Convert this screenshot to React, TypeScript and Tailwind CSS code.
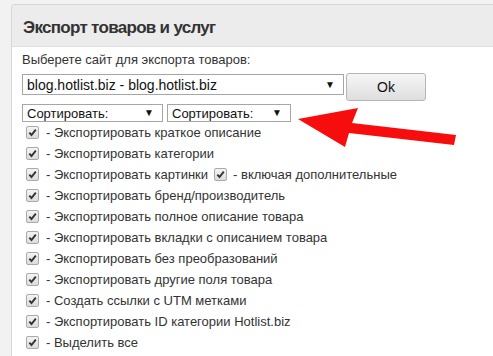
import React from "react";

const rows: { label: string; extra?: string }[] = [
  { label: "- Экспортировать краткое описание" },
  { label: "- Экспортировать категории" },
  { label: "- Экспортировать картинки", extra: "- включая дополнительные" },
  { label: "- Экспортировать бренд/производитель" },
  { label: "- Экспортировать полное описание товара" },
  { label: "- Экспортировать вкладки с описанием товара" },
  { label: "- Экспортировать без преобразований" },
  { label: "- Экспортировать другие поля товара" },
  { label: "- Создать ссылки с UTM метками" },
  { label: "- Экспортировать ID категории Hotlist.biz" },
  { label: "- Выделить все" },
];

function Check() {
  return (
    <span className="inline-flex h-[13px] w-[13px] shrink-0 items-center justify-center rounded-[2px] border border-[#a9a9a9] bg-gradient-to-b from-[#f4f4f4] to-[#dcdcdc]">
      <svg width="9" height="9" viewBox="0 0 9 9">
        <path d="M1.3 4.6 L3.5 7 L7.8 1.6" fill="none" stroke="#333" strokeWidth="1.9" />
      </svg>
    </span>
  );
}

function Select({ text, className }: { text: string; className: string }) {
  return (
    <div
      className={`flex items-center justify-between border border-[#a6a6a6] bg-white pl-[4px] pr-[8px] text-[#111] ${className}`}
    >
      <span className="leading-none">{text}</span>
      <span className="text-[10px] leading-none">▼</span>
    </div>
  );
}

export default function App() {
  return (
    <div
      className="h-[356px] w-[493px] overflow-hidden bg-[#f2f2f2] pl-[11px] pt-[4px] text-[13px] text-[#333]"
      style={{ fontFamily: '"Liberation Sans", Arial, sans-serif' }}
    >
      <div className="relative h-[400px] w-[500px] rounded-tl-[3px] border border-[#d6d6d6] bg-white">
        <div className="flex h-[42px] items-center border-b border-[#e0e0e0] bg-[#ececec] pl-[11px] pt-[4px]">
          <h1 className="text-[17px] font-bold tracking-[-0.7px] text-[#333]">Экспорт товаров и услуг</h1>
        </div>
        <div className="pl-[10px] pt-[5px]">
          <p className="leading-[16px]">Выберете сайт для экспорта товаров:</p>
          <div className="mt-[5px] flex items-start gap-[2px]">
            <Select text="blog.hotlist.biz - blog.hotlist.biz" className="mt-[1px] h-[21px] w-[322px] text-[14px]" />
            <button className="h-[28px] w-[80px] rounded-[3px] border border-[#b5b5b5] bg-gradient-to-b from-[#f6f6f6] to-[#dedede] text-[14px] text-[#111]">
              Ok
            </button>
          </div>
          <div className="mt-[3px] flex gap-[4px]">
            <Select text="Сортировать:" className="h-[18px] w-[141px] text-[13px]" />
            <Select text="Сортировать:" className="h-[18px] w-[124px] text-[13px]" />
          </div>
          <div className="flex flex-col pl-[4px]">
            {rows.map((r) => (
              <div key={r.label} className="flex h-[21px] items-center">
                <Check />
                <span className="ml-[7px] leading-none">{r.label}</span>
                {r.extra && (
                  <>
                    <span className="ml-[6px]">
                      <Check />
                    </span>
                    <span className="ml-[6px] leading-none">{r.extra}</span>
                  </>
                )}
              </div>
            ))}
          </div>
        </div>
      </div>
      <svg className="absolute left-0 top-0" width="493" height="356" viewBox="0 0 493 356">
        <polygon points="298,119 358,108 352,123 456,135 454,145 349,133 345,147" fill="#f70d0d" />
      </svg>
    </div>
  );
}
